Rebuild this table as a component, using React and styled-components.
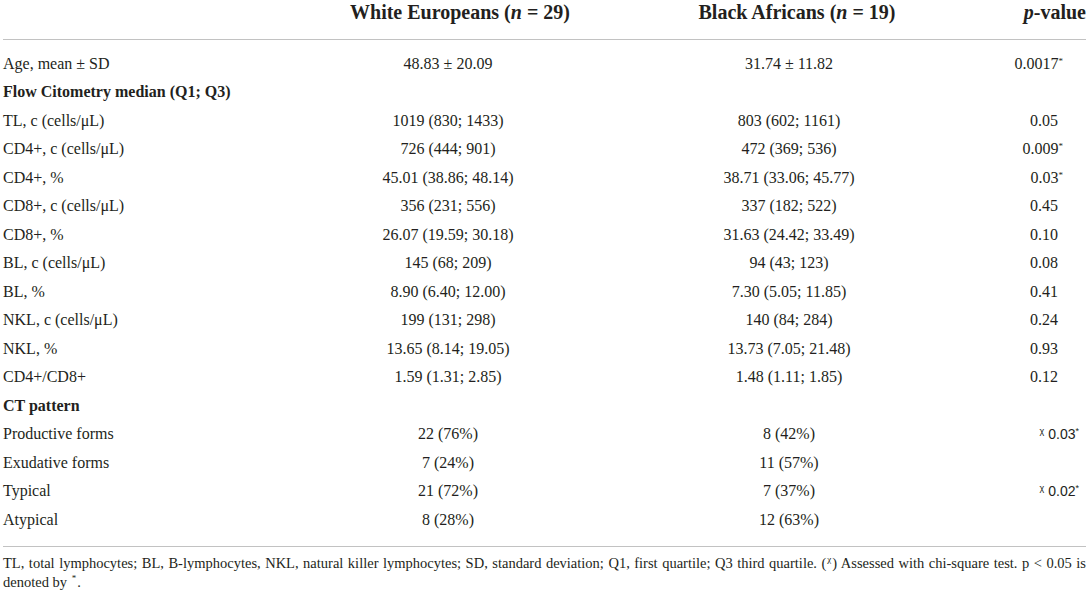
import React from "react";
import styled, { createGlobalStyle } from "styled-components";

const Global = createGlobalStyle`
  html, body { margin: 0; padding: 0; background: #fff; }
  body { font-family: "Liberation Serif", "Times New Roman", serif; color: #231f20; }
`;

const Page = styled.div`
  padding: 0 3px;
  width: 1083px;
`;

const cols = "297px 296px 386px 1fr";

const HeaderRow = styled.div`
  display: grid;
  grid-template-columns: ${cols};
  padding: 1px 0 16px;
  border-bottom: 1px solid #c2c2c2;
  font-weight: 700;
  font-size: 20px;
  line-height: 22px;
`;

const HeadCell = styled.div`
  text-align: ${(p) => p.$align || "center"};
  padding-left: ${(p) => p.$pl || 0}px;
  padding-right: ${(p) => p.$pr || 0}px;
  white-space: nowrap;
`;

const Body = styled.div`
  padding: 9.5px 0 11.5px;
  border-bottom: 1px solid #c2c2c2;
`;

const Row = styled.div`
  display: grid;
  grid-template-columns: ${cols};
  height: 28.5px;
  font-size: 16px;
  line-height: 28.5px;
  white-space: nowrap;
`;

const Label = styled.div`
  text-align: left;
  font-weight: ${(p) => (p.$section ? 700 : 400)};
  grid-column: ${(p) => (p.$section ? "1 / -1" : "auto")};
`;

const Value = styled.div`
  text-align: center;
`;

const PCell = styled.div`
  text-align: right;
  padding-right: ${(p) => (p.$chi ? 7 : 28)}px;
  font-family: ${(p) =>
    p.$chi ? '"Liberation Sans", Arial, sans-serif' : "inherit"};
  font-size: ${(p) => (p.$chi ? "14px" : "inherit")};
`;

const Star = styled.sup`
  font-size: 9px;
  line-height: 1;
  vertical-align: 5px;
  margin-right: ${(p) => (p.$hang ? "-5px" : "0")};
`;

const Chi = styled.sup`
  font-size: 9px;
  line-height: 1;
  vertical-align: 5px;
  margin-right: 4px;
`;

const Note = styled.p`
  margin: 0;
  padding-top: 7px;
  font-size: 14.5px;
  line-height: 19px;
  text-align: justify;
`;

const NoteSup = styled.span`
  display: inline-block;
  font-size: 9px;
  line-height: 9px;
  vertical-align: 6px;
  margin: 0 1px;
`;

const rows = [
  { label: "Age, mean ± SD", a: "48.83 ± 20.09", b: "31.74 ± 11.82", p: "0.0017", star: true },
  { section: "Flow Citometry median (Q1; Q3)" },
  { label: "TL, c (cells/μL)", a: "1019 (830; 1433)", b: "803 (602; 1161)", p: "0.05" },
  { label: "CD4+, c (cells/μL)", a: "726 (444; 901)", b: "472 (369; 536)", p: "0.009", star: true },
  { label: "CD4+, %", a: "45.01 (38.86; 48.14)", b: "38.71 (33.06; 45.77)", p: "0.03", star: true },
  { label: "CD8+, c (cells/μL)", a: "356 (231; 556)", b: "337 (182; 522)", p: "0.45" },
  { label: "CD8+, %", a: "26.07 (19.59; 30.18)", b: "31.63 (24.42; 33.49)", p: "0.10" },
  { label: "BL, c (cells/μL)", a: "145 (68; 209)", b: "94 (43; 123)", p: "0.08" },
  { label: "BL, %", a: "8.90 (6.40; 12.00)", b: "7.30 (5.05; 11.85)", p: "0.41" },
  { label: "NKL, c (cells/μL)", a: "199 (131; 298)", b: "140 (84; 284)", p: "0.24" },
  { label: "NKL, %", a: "13.65 (8.14; 19.05)", b: "13.73 (7.05; 21.48)", p: "0.93" },
  { label: "CD4+/CD8+", a: "1.59 (1.31; 2.85)", b: "1.48 (1.11; 1.85)", p: "0.12" },
  { section: "CT pattern" },
  { label: "Productive forms", a: "22 (76%)", b: "8 (42%)", p: "0.03", star: true, chi: true },
  { label: "Exudative forms", a: "7 (24%)", b: "11 (57%)" },
  { label: "Typical", a: "21 (72%)", b: "7 (37%)", p: "0.02", star: true, chi: true },
  { label: "Atypical", a: "8 (28%)", b: "12 (63%)" },
];

export default function App() {
  return (
    <Page>
      <Global />
      <HeaderRow>
        <HeadCell $align="left" />
        <HeadCell $pl={24}>
          White Europeans (<i>n</i> = 29)
        </HeadCell>
        <HeadCell $pl={16}>
          Black Africans (<i>n</i> = 19)
        </HeadCell>
        <HeadCell $align="right" $pr={0}>
          <i>p</i>-value
        </HeadCell>
      </HeaderRow>
      <Body>
        {rows.map((r, i) =>
          r.section ? (
            <Row key={i}>
              <Label $section>{r.section}</Label>
            </Row>
          ) : (
            <Row key={i}>
              <Label>{r.label}</Label>
              <Value>{r.a}</Value>
              <Value>{r.b}</Value>
              <PCell $chi={r.chi}>
                {r.chi && <Chi>χ</Chi>}
                {r.p}
                {r.star && <Star $hang={!r.chi}>*</Star>}
              </PCell>
            </Row>
          )
        )}
      </Body>
      <Note>
        TL, total lymphocytes; BL, B-lymphocytes, NKL, natural killer
        lymphocytes; SD, standard deviation; Q1, first quartile; Q3 third
        quartile. (<NoteSup>χ</NoteSup>) Assessed with chi-square test. p &lt;
        0.05 is denoted by <NoteSup>*</NoteSup>.
      </Note>
    </Page>
  );
}
